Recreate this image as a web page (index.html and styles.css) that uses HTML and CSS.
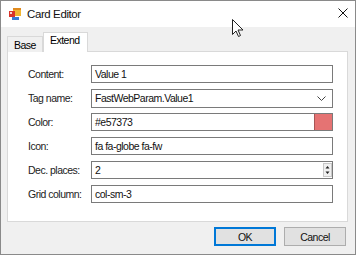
FILE: index.html
```html
<!DOCTYPE html>
<html lang="en">
<head>
    <meta charset="UTF-8">
    <title>Card Editor</title>
    <link rel="stylesheet" href="styles.css">
</head>
<body>
    <div class="window">
        <div class="titlebar">
            <svg class="app-icon" width="12" height="12" viewBox="0 0 12 12">
                <rect x="4" y="0" width="8" height="8" fill="#f2b531"/>
                <rect x="4" y="0" width="8" height="2" fill="#e08a1e"/>
                <rect x="0" y="3" width="6" height="6" fill="#d9342b"/>
                <rect x="1" y="4" width="2" height="2" fill="#f6d6d0"/>
                <rect x="3" y="9" width="7" height="3" fill="#3a7bd5"/>
            </svg>
            <span class="title">Card Editor</span>
            <svg class="close" width="10" height="10" viewBox="0 0 10 10">
                <path d="M0.5 0.5 L9.5 9.5 M9.5 0.5 L0.5 9.5" stroke="#111" stroke-width="1"/>
            </svg>
        </div>

        <div class="client">
            <div class="tabs">
                <div class="tab">Base</div>
                <div class="tab active">Extend</div>
            </div>
            <div class="panel">
                <div class="row">
                    <label>Content:</label>
                    <div class="field">Value 1</div>
                </div>
                <div class="row">
                    <label>Tag name:</label>
                    <div class="field combo">
                        <span>FastWebParam.Value1</span>
                        <svg width="9" height="5" viewBox="0 0 9 5"><path d="M0.5 0.5 L4.5 4.5 L8.5 0.5" fill="none" stroke="#444"/></svg>
                    </div>
                </div>
                <div class="row">
                    <label>Color:</label>
                    <div class="field color">
                        <span>#e57373</span>
                        <div class="swatch"></div>
                    </div>
                </div>
                <div class="row">
                    <label>Icon:</label>
                    <div class="field">fa fa-globe fa-fw</div>
                </div>
                <div class="row">
                    <label>Dec. places:</label>
                    <div class="field spin">
                        <span>2</span>
                        <div class="spinner">
                            <svg width="9" height="14" viewBox="0 0 9 14">
                                <rect x="0.5" y="0.5" width="8" height="13" fill="#f0f0f0" stroke="#c8c8c8"/>
                                <path d="M4.5 3 L2.5 5.5 L6.5 5.5 Z M4.5 11 L2.5 8.5 L6.5 8.5 Z" fill="#222"/>
                            </svg>
                        </div>
                    </div>
                </div>
                <div class="row">
                    <label>Grid column:</label>
                    <div class="field">col-sm-3</div>
                </div>
            </div>
            <div class="buttons">
                <button class="btn default">OK</button>
                <button class="btn">Cancel</button>
            </div>
        </div>

        <svg class="cursor" width="12" height="19" viewBox="0 0 12 19">
            <path d="M0.5 0.5 L0.5 15.5 L4 12 L6.5 17.5 L8.5 16.5 L6 11 L11 11 Z" fill="#fff" stroke="#222" stroke-width="1" stroke-linejoin="round"/>
        </svg>
    </div>
</body>
</html>
```

FILE: styles.css
```css
html, body {
    margin: 0;
    padding: 0;
}
body {
    font-family: "Liberation Sans", Arial, sans-serif;
    font-size: 10.5px;
    letter-spacing: -0.5px;
    color: #000;
    background: #fff;
}
.window {
    position: relative;
    width: 356px;
    height: 255px;
    box-sizing: border-box;
    border: 1px solid #8a8a8a;
    background: #f0f0f0;
    display: flex;
    flex-direction: column;
}
.titlebar {
    height: 26px;
    background: #fff;
    display: flex;
    align-items: center;
    padding: 0 6px 0 8px;
}
.app-icon {
    margin-right: 6px;
}
.title {
    font-size: 11.5px;
    letter-spacing: -0.4px;
    flex: 1;
    color: #111;
}
.close {
    margin-right: 1px;
    margin-top: -2px;
}
.client {
    flex: 1;
    display: flex;
    flex-direction: column;
    padding: 6px 6px 0 6px;
}
.tabs {
    display: flex;
    align-items: flex-end;
    height: 19px;
    margin-bottom: -1px;
    position: relative;
    z-index: 1;
}
.tab {
    padding: 2px 6px 1px 6px;
    border: 1px solid #d9d9d9;
    border-bottom: none;
    background: #f0f0f0;
    height: 12px;
    line-height: 12px;
}
.tab.active {
    background: #fff;
    height: 17px;
    padding: 1px 7px 1px 6px;
    line-height: 13px;
}
.panel {
    width: 341px;
    box-sizing: border-box;
    height: 171px;
    background: #fff;
    border: 1px solid #d9d9d9;
    padding: 13px 14px 0 20px;
    display: flex;
    flex-direction: column;
    gap: 6px;
}
.row {
    display: flex;
    align-items: center;
    height: 18px;
}
.row label {
    width: 63px;
    color: #222;
}
.field {
    flex: 1;
    height: 18px;
    box-sizing: border-box;
    border: 1px solid #7a7a7a;
    background: #fff;
    padding: 0 3px;
    display: flex;
    align-items: center;
    color: #111;
}
.combo {
    height: 19px;
    justify-content: space-between;
    padding-right: 6px;
}
.color {
    padding-right: 0;
    justify-content: space-between;
}
.swatch {
    width: 17px;
    height: 16px;
    background: #e57373;
    border-left: 1px solid #a85555;
}
.spin {
    justify-content: space-between;
    padding-right: 0;
}
.spinner {
    display: flex;
    align-items: center;
}
.spinner svg {
    display: block;
}
.buttons {
    display: flex;
    justify-content: flex-end;
    gap: 8px;
    padding: 5px 3px 0 0;
}
.btn {
    font-family: "Liberation Sans", Arial, sans-serif;
    font-size: 10.5px;
    letter-spacing: -0.5px;
    width: 62px;
    height: 19px;
    background: #e1e1e1;
    border: 1px solid #adadad;
    padding: 0;
    color: #111;
}
.btn.default {
    border: 2px solid #0078d7;
}
.cursor {
    position: absolute;
    left: 231px;
    top: 18px;
}
```
